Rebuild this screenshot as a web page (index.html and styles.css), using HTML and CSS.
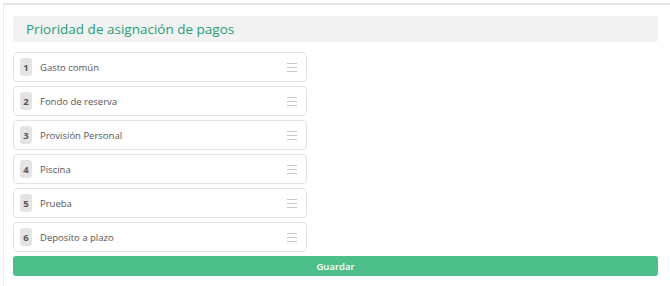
FILE: index.html
```html
<!DOCTYPE html>
<html lang="es">
<head>
  <meta charset="UTF-8" />
  <title>Prioridad de asignación de pagos</title>
  <link rel="stylesheet" href="styles.css">
</head>
<body>
  <section class="card">
    <header class="card-head">
      <h2>Prioridad de asignación de pagos</h2>
    </header>

    <ol class="priority-list">
      <li><span class="num">1</span><span class="name">Gasto común</span><span class="handle"></span></li>
      <li><span class="num">2</span><span class="name">Fondo de reserva</span><span class="handle"></span></li>
      <li><span class="num">3</span><span class="name">Provisión Personal</span><span class="handle"></span></li>
      <li><span class="num">4</span><span class="name">Piscina</span><span class="handle"></span></li>
      <li><span class="num">5</span><span class="name">Prueba</span><span class="handle"></span></li>
      <li><span class="num">6</span><span class="name">Deposito a plazo</span><span class="handle"></span></li>
    </ol>

    <button class="save-btn">Guardar</button>
  </section>
</body>
</html>
```

FILE: styles.css
```css
body {
  margin: 0;
  padding: 3px 0 0 3px;
  font-family: 'Open Sans', sans-serif;
  background: #fff;
  color: #555;
}
.card {
  border-top: 2px solid #e5e5e5;
  border-left: 1px solid #ededed;
  padding: 11px 12px 10px 9px;
}
.card-head {
  background: #f2f2f2;
  border-radius: 3px;
  height: 26px;
  display: flex;
  align-items: center;
  padding-left: 13px;
}
.card-head h2 {
  margin: 0;
  font-size: 13.5px;
  font-weight: 500;
  color: #1f9e77;
}
.priority-list {
  list-style: none;
  margin: 10px 0 0 0;
  padding: 0;
  width: 294px;
  display: flex;
  flex-direction: column;
  gap: 4px;
}
.priority-list li {
  box-sizing: border-box;
  height: 30px;
  border: 1px solid #e2e2e2;
  border-radius: 4px;
  display: flex;
  align-items: center;
  padding: 0 9px 0 6px;
}
.num {
  width: 12px;
  height: 18px;
  border-radius: 3px;
  background: #e4e4e4;
  font-size: 9.5px;
  font-weight: 700;
  color: #555;
  display: flex;
  align-items: center;
  justify-content: center;
}
.name {
  flex: 1;
  margin-left: 8px;
  font-size: 9.5px;
  color: #555;
}
.handle {
  width: 10px;
  height: 7px;
  border-top: 1px solid #c8c8c8;
  border-bottom: 1px solid #c8c8c8;
  position: relative;
}
.handle::after {
  content: '';
  position: absolute;
  left: 0;
  right: 0;
  top: 3px;
  border-top: 1px solid #c8c8c8;
}
.save-btn {
  display: block;
  width: 100%;
  height: 20px;
  margin-top: 4px;
  border: none;
  border-radius: 3px;
  background: #4dbf8a;
  color: #fff;
  font-family: 'Open Sans', sans-serif;
  font-size: 9.5px;
  font-weight: 600;
  cursor: pointer;
}
```
